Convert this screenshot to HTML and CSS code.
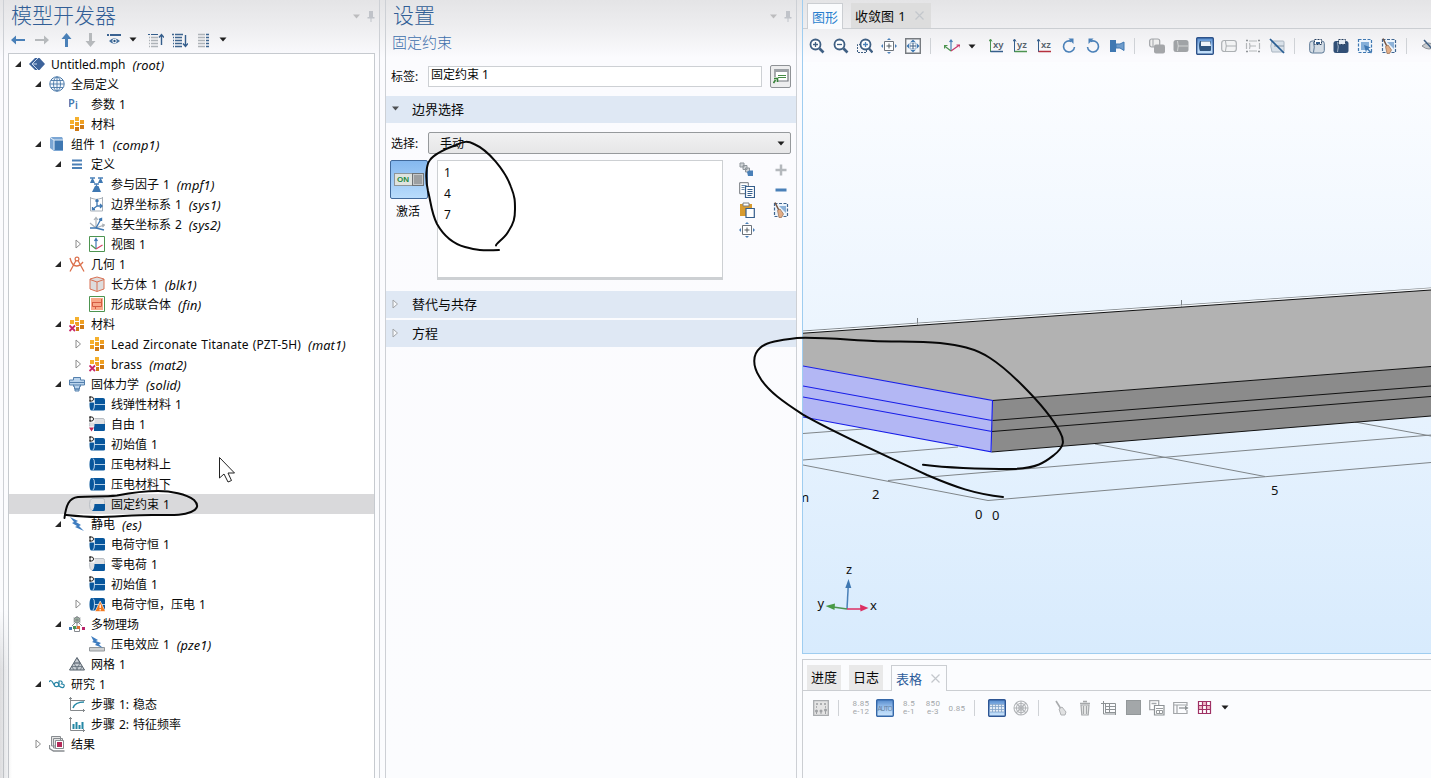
FILE: index.html
```
<!DOCTYPE html>
<html lang="zh-CN">
<head>
<meta charset="utf-8">
<title>Untitled.mph</title>
<link rel="stylesheet" href="styles.css">
</head>
<body>
<svg class="defs" width="0" height="0">
  <defs>
    <linearGradient id="gsel" x1="0" y1="0" x2="0" y2="1"><stop offset="0" stop-color="#5389cc"/><stop offset=".5" stop-color="#a3c9f2"/><stop offset="1" stop-color="#cbe5fc"/></linearGradient>
    <linearGradient id="gsky" x1="0" y1="0" x2="0" y2="1"><stop offset="0" stop-color="#fcfdff"/><stop offset="1" stop-color="#d8ebfd"/></linearGradient>
  </defs>
</svg>
<svg class="sprite" width="0" height="0">
  <symbol id="open" viewBox="0 0 8 8"><path d="M7 1v6H1z" fill="#262626"/></symbol>
  <symbol id="closed" viewBox="0 0 8 10"><path d="M2 1l4.500 4L2 9z" fill="#fff" stroke="#8c8c8c"/></symbol>
  <symbol id="drop" viewBox="0 0 8 5"><path d="M.5.5h7L4 4.500z" fill="#1e1e1e"/></symbol>
  <symbol id="close" viewBox="0 0 9 9"><path d="M.5.5l8 8M8.500.5l-8 8" stroke="#c3c7cc" stroke-width="1.200"/></symbol>
  <symbol id="pin" viewBox="0 0 8 11"><path d="M2 0h4v6h1.500v1.500h-3V11h-1V7.500H.5V6H2z" fill="#c0c3c9"/></symbol>
  <symbol id="left" viewBox="0 0 16 16"><path d="M1 8l5-4.500V7h9v2H6v3.500z" fill="#4a80b8"/></symbol>
  <symbol id="right" viewBox="0 0 16 16"><path d="M15 8l-5-4.500V7H1v2h9v3.500z" fill="#b6b9bc"/></symbol>
  <symbol id="up" viewBox="0 0 16 16"><path d="M8.500 1l5 6H10v8H7V7H3.500z" fill="#4a80b8"/></symbol>
  <symbol id="down" viewBox="0 0 16 16"><path d="M8.500 15l5-6H10V1H7v8H3.500z" fill="#b6b9bc"/></symbol>
  <symbol id="eye" viewBox="0 0 16 16"><path d="M1 3h2M4 3h11" stroke="#3a6291" stroke-width="2"/><path d="M3 9q5-5.500 11 0q-6 5.500-11 0z" fill="#44709e"/><circle cx="8.500" cy="9" r="2.200" fill="#fff"/><circle cx="8.500" cy="9" r="1.200" fill="#27517f"/></symbol>
  <symbol id="collapse" viewBox="0 0 16 16"><path d="M0 2.500h2M3 2.500h7" stroke="#355e8c"/><path d="M1 5.500h1M3 5.500h7M1 8.500h1M3 8.500h7M1 11.500h1M3 11.500h7M1 14.500h1M3 14.500h7" stroke="#aeb3b8" stroke-width="1.600"/><path d="M13.500 13V3M11 5.500L13.500 2.500 16 5.500" fill="none" stroke="#355e8c" stroke-width="1.400"/></symbol>
  <symbol id="expand" viewBox="0 0 16 16"><path d="M0 2.500h2M3 2.500h8M1 5.500h1M3 5.500h7M1 8.500h1M3 8.500h7M1 11.500h1M3 11.500h7M1 14.500h1M3 14.500h7" stroke="#3f668f" stroke-width="1.500"/><path d="M13.500 3v11M11 11.500l2.500 3 2.500-3" fill="none" stroke="#355e8c" stroke-width="1.400"/></symbol>
  <symbol id="cols" viewBox="0 0 16 16"><path d="M2 2.500h7M2 5.500h7M2 8.500h7M2 11.500h7M2 14.500h7" stroke="#aeb3b8" stroke-width="1.600"/><path d="M10 2.500h3M10 5.500h3M10 8.500h3M10 11.500h3M10 14.500h3" stroke="#3f668f" stroke-width="1.600"/></symbol>

  <symbol id="root" viewBox="0 0 16 16"><path d="M0 8l6-6h4.500L16 8l-5.500 6H6z" fill="#3d639b"/><path d="M9 2L3 8l6 6M3 8h5" fill="none" stroke="#c8d8ee"/></symbol>
  <symbol id="globe" viewBox="0 0 16 16"><circle cx="8" cy="8" r="7.200" fill="#f3f8fd" stroke="#4a78a8"/><ellipse cx="8" cy="8" rx="3.500" ry="7" fill="none" stroke="#4a78a8" stroke-width=".9"/><path d="M8 1v14M1 8h14M2 4.500h12M2 11.500h12" stroke="#4a78a8" stroke-width=".9"/></symbol>
  <symbol id="pi" viewBox="0 0 16 16"><text x="-1" y="11" font-family="Noto Sans" font-size="11" font-weight="600" fill="#4376ae">P</text><text x="6" y="13" font-family="Noto Sans" font-size="10" font-weight="600" fill="#4376ae">i</text></symbol>
  <symbol id="mat" viewBox="0 0 16 16"><path d="M6 1h4v4H6zM1 4h4v4H1z" fill="#f5b02e"/><path d="M11 4h4v4h-4zM6 6h4v4H6zM1 9h4v4H1z" fill="#ef9f22"/><path d="M11 9h4v4h-4zM6 11h4v4H6z" fill="#cf7a16"/></symbol>
  <symbol id="matx" viewBox="0 0 16 16"><use href="#mat"/><path d="M0 8.500h7V16H0z" fill="#fff"/><path d="M.5 9.500l5.500 5.500M6 9.500L.5 15" stroke="#c9286a" stroke-width="1.800"/></symbol>
  <symbol id="comp" viewBox="0 0 16 16"><path d="M1 2l2-1h10l1 2v12H5L1 12z" fill="#7ba6d4"/><path d="M5 4h9v10H5z" fill="#3f78b2"/><path d="M1.500 2L5 4v10M5 4h9" fill="none" stroke="#e6f0fa"/></symbol>
  <symbol id="defs" viewBox="0 0 16 16"><path d="M3 4.500h10M3 8.500h10M3 12h10" stroke="#4a7fb5" stroke-width="2"/></symbol>
  <symbol id="mpf" viewBox="0 0 16 16"><path d="M1 2h5M3.500 2v3M9 2h5M11.500 2v3M5 8h5M7.500 8v4" stroke="#4a80b8" stroke-width="1.300"/><path d="M2.500 3.500h2L6 7H1zM10.500 3.500h2L14 7H9zM6 10h3.500l2.500 6H3z" fill="#3f78b2"/></symbol>
  <symbol id="sys1" viewBox="0 0 16 16"><path d="M1.500 1v14h12V1M1.500 2q6 3 12 0" fill="none" stroke="#a9b1b9"/><path d="M8 4v6l-4 3M8 10h5M6.500 5.500L8 3.500l1.500 2M3.500 11v2.500H6M11 8l2 2-2 2" fill="none" stroke="#3f78b2" stroke-width="1.300"/></symbol>
  <symbol id="sys2" viewBox="0 0 16 16"><path d="M7 12V2M7 12l8-3M7 12L1 7M5 4l2-2.500L9 4M13 8l2.500 1-2 2" fill="none" stroke="#aab0b6" stroke-width="1.200"/><path d="M7 12l5-9M7 12H1M7 12l8 2M12.500 5V2.500L10 3.500" fill="none" stroke="#3f78b2" stroke-width="1.400"/></symbol>
  <symbol id="view" viewBox="0 0 16 16"><path d="M.5.5h15v15H.5z" fill="#fff" stroke="#4d9450"/><path d="M7 13V3M5.500 5L7 2.500 8.500 5" fill="none" stroke="#3f78b2" stroke-width="1.200"/><path d="M7 13l6.500-4" stroke="#d84367" stroke-width="1.300"/><path d="M7 13L2 9" stroke="#4d9450" stroke-width="1.300"/></symbol>
  <symbol id="geom" viewBox="0 0 16 16"><circle cx="8" cy="3" r="1.900" fill="none" stroke="#db704c" stroke-width="1.200"/><path d="M7 4.500L1 15.500M9 4.500l6 11M1 2q2 8 6.500 8Q11 10 14 6" fill="none" stroke="#db704c" stroke-width="1.300"/></symbol>
  <symbol id="block" viewBox="0 0 16 16"><path d="M1 3l7-2 7 2v10l-7 2.500L1 13z" fill="#dedcdc" stroke="#d97052"/><path d="M1 3.500L8 6l7-2.500M8 6v9" fill="none" stroke="#d97052"/></symbol>
  <symbol id="union" viewBox="0 0 16 16"><path d="M.5.5h15v15H.5z" fill="#fff" stroke="#4d9450"/><path d="M2 2h12v12H2z" fill="#f8a889"/><path d="M3 6.500h9.500V3M12.500 6v4.500H3.500V6.500M6.500 10.500V13" fill="none" stroke="#d65c43"/></symbol>
  <symbol id="solid" viewBox="0 0 16 16"><path d="M4.500 1.500h7V4h4v5h-4v1.500h-1V13h-5v-2.500h-1V9h-4V4h4zM6 13h4v2H6z" fill="#b9d3ec" stroke="#5480ad"/><path d="M1 6.500h14M4 9h8" stroke="#5480ad"/></symbol>
  <symbol id="dom" viewBox="0 0 16 16"><path d="M2.500 2H14q2 0 2 2v9.500q0 1-1.500 1H2.500Q.5 14.500.5 8.500T2.500 2z" fill="#07569c"/><path d="M4 2.500Q5.500 3 5.500 8T4 14M5.500 8.500H16" fill="none" stroke="#c7dcef" stroke-width=".9"/></symbol>
  <symbol id="bnd" viewBox="0 0 16 16"><path d="M3 2.500H14q1.500 0 1.500 2v9q0 1-1 1H3Q.5 13.500.5 8.500T3 2.500z" fill="#dedfe1" stroke="#b9bec4"/><path d="M5.500 8H16v5.500q0 1.500-1.500 1.500H3Q5.500 13 5.500 8z" fill="#07569c"/></symbol>
  <symbol id="dee" viewBox="0 0 16 16"><path d="M0 0h5.500v6.500H0z" fill="#fff"/><path d="M1 1h2q1.500.3 1.500 2T3 5H1zM0 1h2M0 5h2" fill="none" stroke="#222"/></symbol>
  <symbol id="ddom" viewBox="0 0 16 16"><use href="#dom"/><use href="#dee"/></symbol>
  <symbol id="dbnd" viewBox="0 0 16 16"><use href="#bnd"/><use href="#dee"/></symbol>
  <symbol id="free" viewBox="0 0 16 16"><use href="#dbnd"/><path d="M0 10.500h5V16H0z" fill="#fff"/><path d="M0 11.500h5L2.500 15.500z" fill="#c02858"/></symbol>
  <symbol id="warn" viewBox="0 0 16 16"><use href="#dom"/><path d="M11.200 5l5.300 10.500H6z" fill="#f47a20" stroke="#fff" stroke-width=".6"/><path d="M11.200 8.500v3.500M11.200 13v1.500" stroke="#fff" stroke-width="1.300"/></symbol>
  <symbol id="bolt" viewBox="0 0 16 16"><path d="M1 1l8 4-2 1 5 3-2 1 5 5-9-4 2-1-5-3 2-1z" fill="#3f7dc0"/></symbol>
  <symbol id="multi" viewBox="0 0 16 16"><circle cx="8" cy="4" r="3" fill="#a8cba9" stroke="#878b8f"/><path d="M8 0v8M4.500 2l7 4M11.500 2l-7 4M3 10l3-3M13 10l-3-3M8 8v4M5.500 12.500h5v3h-5z" fill="none" stroke="#85898e"/><path d="M0 11h3v3H0z" fill="#3f78b2"/><path d="M4 10h3v3H4z" fill="#4d9450"/><path d="M8 10h3v3H8z" fill="#df6d34"/><path d="M13 11h3v3h-3z" fill="#b9236a"/></symbol>
  <symbol id="pze" viewBox="0 0 16 16"><path d="M.5 11.500h15v3.500H.5z" fill="#cfd1d2" stroke="#92979b"/><path d="M2 0l7 4-2 1 5 2-2 1.500 4 3.500-8-3 1.500-1.500L3 6l1.500-1z" fill="#3f7dc0"/></symbol>
  <symbol id="mesh" viewBox="0 0 16 16"><path d="M8 1.500L15.500 14H.5z" fill="#c6ccd2" stroke="#535e69"/><path d="M5 7h6M3 10.500h10M5 7l3.500 7M11 7l-3.500 7M3 11l2 3M13 11l-2 3M8 2l3 5-6 0" fill="none" stroke="#626d78" stroke-width=".8"/></symbol>
  <symbol id="study" viewBox="0 0 16 16"><path d="M0 6q2-3 4 1t4 3" fill="none" stroke="#2a86a6" stroke-width="1.200"/><circle cx="7.500" cy="8.500" r="2.200" fill="#fff" stroke="#2a86a6" stroke-width="1.200"/><path d="M10 11V5h2q2 1 .5 3 3.500 0 2.500 2.500T10 10" fill="none" stroke="#2a86a6" stroke-width="1.200"/></symbol>
  <symbol id="step1" viewBox="0 0 16 16"><path d="M1.500 1v13.500H16M0 2.500h3M14.500 13v3M1 4.500h15" fill="none" stroke="#85898c"/><path d="M4 12Q6 6 15 6" fill="none" stroke="#2588a5" stroke-width="1.500"/></symbol>
  <symbol id="step2" viewBox="0 0 16 16"><path d="M1.500 1v13.500H16M0 2.500h3M14.500 13v3" fill="none" stroke="#85898c"/><path d="M4.500 13V8M7.500 13V6M10.500 13V9M13.500 13V6" stroke="#2588a5" stroke-width="2"/></symbol>
  <symbol id="results" viewBox="0 0 16 16"><path d="M2.500 .5h9V10h-9zM4.500 2.500h9V12h-9z" fill="#e5e5e5" stroke="#888c90"/><path d="M6.500 4.500h8v8h-8z" fill="#fff" stroke="#888c90"/><path d="M8 6h5v5H8z" fill="#b42a59"/><path d="M.5 9v3.500l4 2.500h11" fill="none" stroke="#888c90" stroke-width="1.300"/></symbol>

  <symbol id="zin" viewBox="0 0 16 16"><circle cx="6.500" cy="6.500" r="5" fill="#fff" stroke="#3f5f83" stroke-width="1.800"/><path d="M10.500 10.500l4 4" stroke="#3f5f83" stroke-width="2.600"/><path d="M4 6.500h5M6.500 4v5" stroke="#3f5f83" stroke-width="1.300"/></symbol>
  <symbol id="zout" viewBox="0 0 16 16"><circle cx="6.500" cy="6.500" r="5" fill="#fff" stroke="#3f5f83" stroke-width="1.800"/><path d="M10.500 10.500l4 4" stroke="#3f5f83" stroke-width="2.600"/><path d="M4 6.500h5" stroke="#3f5f83" stroke-width="1.300"/></symbol>
  <symbol id="zbox" viewBox="0 0 16 16"><path d="M4 6.500H.5v8h9V12" fill="none" stroke="#3f5f83" stroke-dasharray="2 1"/><circle cx="8.500" cy="6.500" r="5" fill="#fff" stroke="#3f5f83" stroke-width="1.800"/><path d="M12 10.500l3.500 4" stroke="#3f5f83" stroke-width="2.400"/><path d="M6 6.500h5M8.500 4v5" stroke="#4a80b8" stroke-width="1.300"/></symbol>
  <symbol id="zsel" viewBox="0 0 16 16"><path d="M3.500 3.500h9v9h-9z" fill="#fff" stroke="#6c737b"/><path d="M5.500 8h5M8 5.500v5" stroke="#555c63"/><path d="M8 0l2 2H6zM8 16l2-2H6zM0 8l2-2v4zM16 8l-2-2v4z" fill="#4a80b8"/></symbol>
  <symbol id="zext" viewBox="0 0 16 16"><path d="M.7.7h14.600v14.600H.7z" fill="#f5f7fa" stroke="#777b80" stroke-width="1.400"/><path d="M8 1.500L10.500 4h-5zM8 14.500l2.500-2.500h-5zM1.500 8L4 5.500v5zM14.500 8L12 5.500v5z" fill="#3f78b2"/><path d="M5 5h6v6H5z" fill="#fff" stroke="#8ba9c9"/><path d="M5 8h6M8 5v6" stroke="#3f5f83"/></symbol>
  <symbol id="axes" viewBox="0 0 16 16"><path d="M7 13V2M5.500 4L7 2l1.500 2" fill="none" stroke="#4a80b8" stroke-width="1.200"/><path d="M7 13l8.500-6M12.500 7H16v2.500" fill="none" stroke="#ca376b" stroke-width="1.200"/><path d="M7 13L.5 8M.5 10.500V7.500h3" fill="none" stroke="#4d9450" stroke-width="1.200"/></symbol>
  <symbol id="xy" viewBox="0 0 16 16"><path d="M1.500 14V2M0 3.500L1.500 1 3 3.500" fill="none" stroke="#4d9450"/><path d="M1.500 13.500H14" stroke="#355e8c" stroke-width="1.500"/><text x="4" y="10" class="axt">xy</text></symbol>
  <symbol id="yz" viewBox="0 0 16 16"><path d="M1.500 14V2M0 3.500L1.500 1 3 3.500" fill="none" stroke="#355e8c"/><path d="M1.500 13.500H14" stroke="#4d9450" stroke-width="1.500"/><text x="4" y="10" class="axt">yz</text></symbol>
  <symbol id="xz" viewBox="0 0 16 16"><path d="M1.500 14V2M0 3.500L1.500 1 3 3.500" fill="none" stroke="#355e8c"/><path d="M1.500 13.500H14" stroke="#b6313e" stroke-width="1.500"/><text x="4" y="10" class="axt">xz</text></symbol>
  <symbol id="cw" viewBox="0 0 16 16"><path d="M10.500 3.500A5.500 5.500 0 1 0 13.500 9" fill="none" stroke="#4a80b8" stroke-width="1.600"/><path d="M7.500 .5h5V6z" fill="#4a80b8"/></symbol>
  <symbol id="ccw" viewBox="0 0 16 16"><path d="M5.500 3.500A5.500 5.500 0 1 1 2.500 9" fill="none" stroke="#4a80b8" stroke-width="1.600"/><path d="M8.500 .5h-5V6z" fill="#4a80b8"/></symbol>
  <symbol id="cam" viewBox="0 0 16 16"><path d="M1 2h6v12H1z" fill="#3f78b2"/><path d="M7 6h4L15 4v8.500L11 10H7z" fill="#6f9ccb" stroke="#3f78b2"/></symbol>
  <symbol id="transp" viewBox="0 0 16 16"><rect x=".7" y="1" width="10" height="8" rx="2" fill="#eee" stroke="#a0a3a7" stroke-width="1.200"/><path d="M4 1v8" stroke="#a0a3a7"/><rect x="5" y="6.500" width="11" height="9" rx="2" fill="#a4a6a9"/></symbol>
  <symbol id="cyl" viewBox="0 0 16 16"><rect x=".5" y="2" width="15" height="12" rx="2.500" fill="#a0a3a6"/><path d="M4.500 3q1.500 5 0 10M5 8h10" fill="none" stroke="#dedfe0" stroke-width=".8"/></symbol>
  <symbol id="cylsel" viewBox="0 0 18 18"><rect x=".7" y=".7" width="16.600" height="16.600" rx="1" fill="url(#gsel)" stroke="#2d528a" stroke-width="1.400"/><path d="M4 4h10q1 0 1 1.500V13q0 1-1 1H4q-2-5 0-10z" fill="#2f547e"/><path d="M5 4.500h9L15 9H5z" fill="#eef3f8"/></symbol>
  <symbol id="cylo" viewBox="0 0 16 16"><rect x=".7" y="2.500" width="14.600" height="11" rx="2.500" fill="#f2f3f4" stroke="#acb0b3" stroke-width="1.200"/><path d="M4.500 3q1.500 5 0 10M5 8h10" fill="none" stroke="#acb0b3"/></symbol>
  <symbol id="cylp" viewBox="0 0 16 16"><path d="M4 3h8M4 13h8M5 8h6M1.500 5v6M14.500 5v6M4.500 5q1 3 0 6" fill="none" stroke="#b4b7ba" stroke-width="1.200"/><path d="M1 2.500h2M13 2.500h2M1 13.500h2M13 13.500h2" stroke="#909498" stroke-width="1.500"/></symbol>
  <symbol id="cyls" viewBox="0 0 16 16"><path d="M3 3h11q1 0 1 1v9q0 1-1 1H3Q.5 8 3 3z" fill="#d9e1e9" stroke="#aab6c2"/><path d="M5 8h10" stroke="#8c9aa8"/><path d="M1 1l14 14" stroke="#275d93" stroke-width="1.700"/></symbol>
  <symbol id="selb" viewBox="0 0 16 16"><rect x=".7" y="3" width="14.600" height="12" rx="2.500" fill="#d5dde5" stroke="#5c7895"/><path d="M4.500 4q1.500 5 0 10.500" fill="none" stroke="#5c7895"/><path d="M5.500 1.500h7v5h-7z" fill="#fff" stroke="#263f5e" stroke-dasharray="2 1"/><path d="M7 4h4v2H7z" fill="#355e8c"/></symbol>
  <symbol id="seld" viewBox="0 0 16 16"><rect x=".5" y="3" width="15" height="12" rx="2.500" fill="#314f76"/><path d="M4.500 4q1.500 5 0 10" fill="none" stroke="#a0b1c4"/><path d="M5.500 1.500h7v5h-7z" fill="#e4ebf2" stroke="#263f5e" stroke-dasharray="2 1"/></symbol>
  <symbol id="selc" viewBox="0 0 16 16"><path d="M1.500 1.500h13v13h-13z" fill="#edf5fd" stroke="#3f78b2" stroke-width="1.200" stroke-dasharray="3 1.500"/><path d="M4 4h8v8H4z" fill="#84afd9"/><path d="M7 7l7 2.500-3 1 4 4-1 1-4-4-1 3z" fill="#3f78b2"/></symbol>
  <symbol id="clear" viewBox="0 0 16 16"><path d="M1.500 1.500h13v13h-13z" fill="#edf5fd" stroke="#3f6590" stroke-width="1.200" stroke-dasharray="3 1.500"/><path d="M6 4h7v7z" fill="#8db2d8"/><path d="M2 .5l4 8" stroke="#765440" stroke-width="1.500"/><path d="M4.500 8.500L7 7l3.500 5-2 3.500H6z" fill="#e2ad86" stroke="#936c50" stroke-width=".7"/></symbol>
  <symbol id="hide" viewBox="0 0 16 16"><path d="M1 8q6-6 14 0-7 6-14 0z" fill="#c9cbce" stroke="#8e9298"/><path d="M3 2l11 12" stroke="#3f5f83" stroke-width="1.500"/></symbol>

  <symbol id="eval" viewBox="0 0 16 16"><path d="M.7.7h14.600v14.600H.7z" fill="#e4e4e4" stroke="#a9acaf" stroke-width="1.300"/><path d="M3 4h2M7 4h2M11 4h2M3 7h1M12 7h1" stroke="#9a9da0" stroke-width="1.500"/><circle cx="3.500" cy="11" r="1.500" fill="#9fa1a4"/><circle cx="8" cy="11" r="1.500" fill="#9fa1a4"/><circle cx="12.500" cy="10" r="1.500" fill="#9fa1a4"/><path d="M3.500 11v3M8 11v3M12.500 10v4" stroke="#9fa1a4"/></symbol>
  <symbol id="auto" viewBox="0 0 18 18"><rect x=".7" y=".7" width="16.600" height="16.600" rx="1" fill="url(#gsel)" stroke="#3467a8" stroke-width="1.400"/><text x="1.500" y="12" font-family="Liberation Sans" font-size="6.500" textLength="15" fill="#66819f">AUTO</text></symbol>
  <symbol id="grid" viewBox="0 0 18 18"><rect x=".7" y=".7" width="16.600" height="16.600" rx="1" fill="url(#gsel)" stroke="#2d5593" stroke-width="1.400"/><path d="M2 5h14v8H2z" fill="#e5edf6"/><path d="M2 5.500h14M2 7.500h14M2 10.500h14M2 13h14M4.500 5v8M7.500 5v8M10.500 5v8M13.500 5v8" stroke="#81a2c8" stroke-width=".8"/></symbol>
  <symbol id="polar" viewBox="0 0 16 16"><g fill="none" stroke="#b2b5b8" stroke-width="1.100"><circle cx="8" cy="8" r="7"/><circle cx="8" cy="8" r="4.600"/><circle cx="8" cy="8" r="2.200"/><path d="M8 1v14M1 8h14M3 3l10 10M13 3L3 13"/></g></symbol>
  <symbol id="broom" viewBox="0 0 16 16"><path d="M3 1l5 8" stroke="#a8abad" stroke-width="1.600"/><path d="M6 9l3-2 4 5-1 3H8z" fill="#e0e1e2" stroke="#b0b2b5"/></symbol>
  <symbol id="trash" viewBox="0 0 16 16"><path d="M3 3.500h10M6 1.500h4" stroke="#a5a8aa" stroke-width="1.300"/><path d="M4 5h8l-.8 10H4.800zM6.500 6v8M9.500 6v8" fill="#e9eaea" stroke="#a5a8aa" stroke-width="1.200"/></symbol>
  <symbol id="tab1" viewBox="0 0 16 16"><path d="M2.500 1v13H15M0 3.500h14.500V15M4 3.500h10M4 6.500h10M4 9.500h10M4 12.500h10M8.500 3v10M4.500 3v10" fill="none" stroke="#8d9295"/></symbol>
  <symbol id="copy2" viewBox="0 0 16 16"><path d="M.7.7h9v9h-9z" fill="#fff" stroke="#a6a9ac" stroke-width="1.300"/><path d="M2.500 3.500h5" stroke="#a6a9ac" stroke-width="1.500"/><path d="M5.500 5.500h9.500v9.500H5.500z" fill="#fff" stroke="#8e9396" stroke-width="1.200"/><path d="M7 8.500h7M7.500 10.500h6v3h-6zM10.500 10v4" fill="none" stroke="#969a9d"/></symbol>
  <symbol id="export" viewBox="0 0 16 16"><path d="M14 6V2.500H.7v11H14V10M1 5h13M4 5v8" fill="none" stroke="#a2a5a8" stroke-width="1.200"/><path d="M6 8h7" stroke="#8f9496" stroke-width="1.300"/><path d="M12 5.500L15.500 8 12 10.500z" fill="#8f9496"/></symbol>
  <symbol id="table" viewBox="0 0 16 16"><path d="M1.500 1.500h12v12h-12z" fill="#fff"/><path d="M5.500 1.500h4v4h-4zM1.500 5.500h4v4h-4zM9.500 5.500h4v4h-4z" fill="#f4b9c7"/><path d="M1.500 1.500h12v12h-12zM1.500 5.500h12M1.500 9.500h12M5.500 1.500v12M9.500 1.500v12" fill="none" stroke="#9f3164" stroke-width="1.200"/></symbol>

  <symbol id="goto" viewBox="0 0 16 16"><path d="M2 1.500h13v11.500H2z" fill="#fff" stroke="#74787e" stroke-width="1.200"/><path d="M2 2.500h13" stroke="#9da1a6" stroke-width="3"/><path d="M5 7.500h8M5 9.500h8" stroke="#458c45" stroke-width="1.200"/><path d="M0 9h5v6H0z" fill="#efefef"/><path d="M.5 15l2-3M1 10.500h3.500V14" fill="none" stroke="#388239" stroke-width="1.600"/></symbol>
  <symbol id="bulk" viewBox="0 0 16 16"><g stroke="#8e959b" fill="#cfd3d6"><path d="M1 1h4v4H1zM4 3.500h4v4H4zM6.500 6h4v4h-4z"/></g><path d="M8 10l2-1.500h4V14H9z" fill="#4a80b8"/></symbol>
  <symbol id="copy" viewBox="0 0 16 16"><path d="M.7.7h8.600v11H.7z" fill="#fff" stroke="#70767c"/><path d="M2.500 3.500h5M2.500 5.500h3M2.500 7.500h3" stroke="#6988a8"/><path d="M6.500 4.500h9v11h-9z" fill="#fff" stroke="#355e8c" stroke-width="1.200"/><path d="M8.500 7.500h5M8.500 9.500h5M8.500 11.500h5M8.500 13.500h4" stroke="#355e8c"/></symbol>
  <symbol id="paste" viewBox="0 0 16 16"><path d="M1 2h12v12H1z" fill="#d89b30"/><path d="M4 1h6v3H4z" fill="#fff" stroke="#7d7e80"/><path d="M7 6.500h8.300v9H7z" fill="#fff" stroke="#355e8c" stroke-width="1.200"/></symbol>
  <symbol id="plus" viewBox="0 0 16 16"><path d="M8 2.500v11M2.500 8h11" stroke="#b4b8bc" stroke-width="2.500"/></symbol>
  <symbol id="minus" viewBox="0 0 16 16"><path d="M2.500 8h11" stroke="#4a80b8" stroke-width="3"/></symbol>
</svg>

<main class="app">
  <section class="panel builder">
    <header class="head"><h1>模型开发器</h1><span class="ctl"><svg class="d"><use href="#drop"/></svg><svg class="pin"><use href="#pin"/></svg></span></header>
    <div class="bar tree-bar">
      <i><svg><use href="#left"/></svg></i><i><svg><use href="#right"/></svg></i><i><svg><use href="#up"/></svg></i><i><svg><use href="#down"/></svg></i><i><svg><use href="#eye"/></svg></i><b><svg><use href="#drop"/></svg></b>
      <i><svg><use href="#collapse"/></svg></i><i><svg><use href="#expand"/></svg></i><i><svg><use href="#cols"/></svg></i><b><svg><use href="#drop"/></svg></b>
    </div>
    <div class="tree">
      <div class="row l0"><svg class="tw"><use href="#open"/></svg><svg class="ic"><use href="#root"/></svg><span>Untitled.mph</span><em>(root)</em></div>
      <div class="row l1"><svg class="tw"><use href="#open"/></svg><svg class="ic"><use href="#globe"/></svg><span>全局定义</span></div>
      <div class="row l2"><svg class="tw"></svg><svg class="ic"><use href="#pi"/></svg><span>参数 1</span></div>
      <div class="row l2"><svg class="tw"></svg><svg class="ic"><use href="#mat"/></svg><span>材料</span></div>
      <div class="row l1"><svg class="tw"><use href="#open"/></svg><svg class="ic"><use href="#comp"/></svg><span>组件 1</span><em>(comp1)</em></div>
      <div class="row l2"><svg class="tw"><use href="#open"/></svg><svg class="ic"><use href="#defs"/></svg><span>定义</span></div>
      <div class="row l3"><svg class="tw"></svg><svg class="ic"><use href="#mpf"/></svg><span>参与因子 1</span><em>(mpf1)</em></div>
      <div class="row l3"><svg class="tw"></svg><svg class="ic"><use href="#sys1"/></svg><span>边界坐标系 1</span><em>(sys1)</em></div>
      <div class="row l3"><svg class="tw"></svg><svg class="ic"><use href="#sys2"/></svg><span>基矢坐标系 2</span><em>(sys2)</em></div>
      <div class="row l3"><svg class="tw sh"><use href="#closed"/></svg><svg class="ic"><use href="#view"/></svg><span>视图 1</span></div>
      <div class="row l2"><svg class="tw"><use href="#open"/></svg><svg class="ic"><use href="#geom"/></svg><span>几何 1</span></div>
      <div class="row l3"><svg class="tw"></svg><svg class="ic"><use href="#block"/></svg><span>长方体 1</span><em>(blk1)</em></div>
      <div class="row l3"><svg class="tw"></svg><svg class="ic"><use href="#union"/></svg><span>形成联合体</span><em>(fin)</em></div>
      <div class="row l2"><svg class="tw"><use href="#open"/></svg><svg class="ic"><use href="#matx"/></svg><span>材料</span></div>
      <div class="row l3"><svg class="tw sh"><use href="#closed"/></svg><svg class="ic"><use href="#mat"/></svg><span class="latin">Lead Zirconate Titanate (PZT-5H)</span><em>(mat1)</em></div>
      <div class="row l3"><svg class="tw sh"><use href="#closed"/></svg><svg class="ic"><use href="#matx"/></svg><span class="latin">brass</span><em>(mat2)</em></div>
      <div class="row l2"><svg class="tw"><use href="#open"/></svg><svg class="ic"><use href="#solid"/></svg><span>固体力学</span><em>(solid)</em></div>
      <div class="row l3"><svg class="tw"></svg><svg class="ic"><use href="#ddom"/></svg><span>线弹性材料 1</span></div>
      <div class="row l3"><svg class="tw"></svg><svg class="ic"><use href="#free"/></svg><span>自由 1</span></div>
      <div class="row l3"><svg class="tw"></svg><svg class="ic"><use href="#ddom"/></svg><span>初始值 1</span></div>
      <div class="row l3"><svg class="tw"></svg><svg class="ic"><use href="#dom"/></svg><span>压电材料上</span></div>
      <div class="row l3"><svg class="tw"></svg><svg class="ic"><use href="#dom"/></svg><span>压电材料下</span></div>
      <div class="row l3 selected"><svg class="tw"></svg><svg class="ic"><use href="#bnd"/></svg><span>固定约束 1</span></div>
      <div class="row l2"><svg class="tw"><use href="#open"/></svg><svg class="ic"><use href="#bolt"/></svg><span>静电</span><em>(es)</em></div>
      <div class="row l3"><svg class="tw"></svg><svg class="ic"><use href="#ddom"/></svg><span>电荷守恒 1</span></div>
      <div class="row l3"><svg class="tw"></svg><svg class="ic"><use href="#dbnd"/></svg><span>零电荷 1</span></div>
      <div class="row l3"><svg class="tw"></svg><svg class="ic"><use href="#ddom"/></svg><span>初始值 1</span></div>
      <div class="row l3"><svg class="tw sh"><use href="#closed"/></svg><svg class="ic"><use href="#warn"/></svg><span>电荷守恒，压电 1</span></div>
      <div class="row l2"><svg class="tw"><use href="#open"/></svg><svg class="ic"><use href="#multi"/></svg><span>多物理场</span></div>
      <div class="row l3"><svg class="tw"></svg><svg class="ic"><use href="#pze"/></svg><span>压电效应 1</span><em>(pze1)</em></div>
      <div class="row l2"><svg class="tw"></svg><svg class="ic"><use href="#mesh"/></svg><span>网格 1</span></div>
      <div class="row l1"><svg class="tw"><use href="#open"/></svg><svg class="ic"><use href="#study"/></svg><span>研究 1</span></div>
      <div class="row l2"><svg class="tw"></svg><svg class="ic"><use href="#step1"/></svg><span>步骤 1: 稳态</span></div>
      <div class="row l2"><svg class="tw"></svg><svg class="ic"><use href="#step2"/></svg><span>步骤 2: 特征频率</span></div>
      <div class="row l1"><svg class="tw sh"><use href="#closed"/></svg><svg class="ic"><use href="#results"/></svg><span>结果</span></div>
    </div>
  </section>

  <section class="panel settings">
    <header class="head"><h1>设置</h1><span class="ctl"><svg class="d"><use href="#drop"/></svg><svg class="pin"><use href="#pin"/></svg></span></header>
    <h2>固定约束</h2>
    <div class="field name"><label>标签:</label><div class="input">固定约束 1</div><div class="btn"><svg><use href="#goto"/></svg></div></div>
    <div class="sec first"><svg class="sd"><use href="#drop"/></svg>边界选择</div>
    <div class="field pick"><label>选择:</label><div class="select"><span>手动</span><svg><use href="#drop"/></svg></div></div>
    <div class="sel">
      <div class="act"><div class="toggle"><span>ON</span><s></s></div><p>激活</p></div>
      <div class="list"><div>1</div><div>4</div><div>7</div></div>
      <div class="tools"><svg><use href="#bulk"/></svg><svg><use href="#plus"/></svg><svg><use href="#copy"/></svg><svg><use href="#minus"/></svg><svg><use href="#paste"/></svg><svg><use href="#clear"/></svg><svg><use href="#zsel"/></svg></div>
    </div>
    <div class="sec"><svg class="sc"><use href="#closed"/></svg>替代与共存</div>
    <div class="sec"><svg class="sc"><use href="#closed"/></svg>方程</div>
  </section>

  <div class="right">
    <section class="graphics">
      <div class="tabs"><div class="tab on blue">图形</div><div class="tab conv">收敛图 1<svg><use href="#close"/></svg></div></div>
      <div class="bar gbar">
        <i><svg><use href="#zin"/></svg></i><i><svg><use href="#zout"/></svg></i><i><svg><use href="#zbox"/></svg></i><i><svg><use href="#zsel"/></svg></i><i><svg><use href="#zext"/></svg></i><u class="short"></u>
        <i><svg><use href="#axes"/></svg></i><b class="gdrop"><svg><use href="#drop"/></svg></b>
        <i><svg><use href="#xy"/></svg></i><i><svg><use href="#yz"/></svg></i><i><svg><use href="#xz"/></svg></i><i><svg><use href="#cw"/></svg></i><i><svg><use href="#ccw"/></svg></i><i><svg><use href="#cam"/></svg></i><u></u>
        <i><svg><use href="#transp"/></svg></i><i><svg><use href="#cyl"/></svg></i><i><svg class="big"><use href="#cylsel"/></svg></i><i><svg><use href="#cylo"/></svg></i><i><svg><use href="#cylp"/></svg></i><i><svg><use href="#cyls"/></svg></i><u></u>
        <i><svg><use href="#selb"/></svg></i><i><svg><use href="#seld"/></svg></i><i><svg><use href="#selc"/></svg></i><i><svg><use href="#clear"/></svg></i><u></u><i><svg><use href="#hide"/></svg></i>
      </div>
      <svg class="scene" viewBox="803 62 628 591" width="628" height="591">
        <rect x="803" y="62" width="628" height="591" fill="url(#gsky)"/>
        <g fill="none" stroke="#7f8589">
          <path d="M803 433.500l67-5M803 460l155-13M803 465l185 35.500 443-38M888 480.500l202-17 341-28.500M1095 444l170 32.500M1355 422l76 14"/>
          <path d="M803 331l628-43M917.500 318v7M1181.500 300v7"/>
        </g>
        <path d="M803 332.500l628-43V288L803 331.500z" fill="#fff" opacity=".7"/>
        <path d="M803 333.200l628-43.200v76.500L992.500 400.500 803 366z" fill="#b2b2b2"/>
        <path d="M992.500 400.500l438.500-34v49.500l-439.500 36z" fill="#8b8b8b"/>
        <path d="M803 333.200l628-43.200M992.500 400.500l438.500-34M992.500 420.500l438.500-34.500M992 431.500l439-35M991.500 452l439.500-36" fill="none" stroke="#111"/>
        <path d="M803 366l189.500 34.500-1.500 51.200L803 417z" fill="#b3b7f4"/>
        <path d="M803 366l189.500 34.500-1.500 51.200L803 417M803 386l189 34.500M803 397l189 34.500" fill="none" stroke="#171de8" stroke-width="1.150"/>
        <g class="lbl"><text x="797" y="502">m</text><text x="872" y="499">2</text><text x="975" y="519">0</text><text x="992" y="520">0</text><text x="1271" y="495">5</text><text x="846" y="574">z</text><text x="817.500" y="608">y</text><text x="870" y="610">x</text></g>
        <path d="M847 609l1.300-24" stroke="#4a80b8" stroke-width="1.500"/><path d="M845.300 588l3.200-9 2.800 9z" fill="#3f78b2"/>
        <path d="M847 609l-14-2" stroke="#4d9450" stroke-width="1.500"/><path d="M835 603.500l-9.500 2.500 9 4z" fill="#489a46"/>
        <path d="M847 609h14" stroke="#dc2f62" stroke-width="1.500"/><path d="M860 604.500l8.500 3.500-8 3.500z" fill="#dc2f62"/>
      </svg>
    </section>
    <section class="output">
      <div class="tabs otabs"><div class="tab">进度</div><div class="tab">日志</div><div class="tab on navy">表格<svg><use href="#close"/></svg></div></div>
      <div class="bar obar">
        <i><svg><use href="#eval"/></svg></i><u></u>
        <i class="num">8.85<br>e-12</i><i><svg class="big"><use href="#auto"/></svg></i><i class="num">8.5<br>e-1</i><i class="num">850<br>e-3</i><i class="num one">0.85</i><u></u>
        <i><svg class="big"><use href="#grid"/></svg></i><i><svg><use href="#polar"/></svg></i><u></u>
        <i><svg><use href="#broom"/></svg></i><i><svg><use href="#trash"/></svg></i><i><svg><use href="#tab1"/></svg></i><i><span class="block"></span></i><i><svg><use href="#copy2"/></svg></i><i><svg><use href="#export"/></svg></i><i><svg><use href="#table"/></svg></i><b><svg><use href="#drop"/></svg></b>
      </div>
    </section>
  </div>
</main>

<div class="edge-shade"></div>
<svg class="ink" viewBox="0 0 1431 778" width="1431" height="778">
  <g fill="none" stroke="#080808" stroke-width="2" stroke-linecap="round" stroke-linejoin="round">
    <path d="M496 245.500C496 243 504 239 508 232C514 223 515 218 515 209C515 201 515 197 511 187C505 170 488 150 474 144C468 141 464 141 456 145C448 148 434 154 430 160C426 165 425 178 428 191C431 202 431 212 437 224C445 238 454 244 465 247C476 250 482 251 499 250"/>
    <path d="M64.500 518C66 505 69 498 78 497C91 496 104 497 117 495.500C130 493 142 491 158 491C171 491 186 494 194 500C199 505 198 509 191 512C182 516 172 515 152 515C132 515 115 517 97 517C86 517 76 516 66.500 515"/>
    <path d="M923 464.700C950 468 990 469 1013 469C1038 468 1045 462 1054 455C1064 447 1065 441 1060 432C1052 417 1038 401 1023 386C1012 375 1001 365 990 358C975 348 958 345 940 343C918 341 895 342 873 341C850 340 820 337 797 338C780 340 766 342 760 348C752 355 753 366 759 376C767 391 785 403 803 414.700C840 436 885 455 927 475C955 487 975 494 1003 497"/>
  </g>
  <path d="M219.500 457.500v20.500l4.500-4 4 8 3.500-1.500-3.500-7.500h6.500z" fill="#fff" stroke="#222"/>
</svg>
</body>
</html>
```
FILE: styles.css
```
* { box-sizing: border-box; }
html, body { margin: 0; height: 778px; overflow: hidden; }
body {
  font-family: "Noto Sans", "Noto Sans CJK SC", sans-serif;
  font-size: 12px;
  color: #0a0a0a;
  background: linear-gradient(#e4e4e6 0, #eeeef0 28px, #fbfbfe 58px, #fbfcfe 100%);
}
svg { display: block; flex: none; overflow: visible; }
.defs { position: absolute; }
.sprite { display: none; }
h1, h2, p { margin: 0; font-weight: 300; }
.app { display: flex; gap: 5px; height: 778px; padding-left: 3px; overflow: hidden; }
.panel { border: solid #cdd0d5; border-width: 0 1px; flex: none; display: flex; flex-direction: column; }
.builder { width: 377px; padding: 0 4px; }
.settings { width: 412px; }

.head { display: flex; justify-content: space-between; align-items: center; height: 32px; padding: 0 0 0 3px; }
.head h1 { font-size: 21px; line-height: 30px; height: 32px; color: #315e96; }
.settings .head { padding: 0 4px 0 7px; }
.ctl { display: flex; align-items: center; gap: 6px; }
.ctl .d { width: 9px; height: 5px; opacity: .22; }
.ctl .pin { width: 8px; height: 11px; }

.bar { display: flex; align-items: center; flex: none; }
.bar i { width: 24px; height: 24px; flex: none; display: flex; align-items: center; justify-content: center; font-style: normal; }
.bar i svg { width: 16px; height: 16px; }
.bar i svg.big { width: 18px; height: 18px; }
.bar b { width: 14px; display: flex; justify-content: center; flex: none; }
.bar b svg { width: 8px; height: 5px; }
.bar u { width: 16px; height: 16px; flex: none; padding-left: 5px; text-decoration: none; }
.bar u::before { content: ""; display: block; width: 1px; height: 16px; background: #cfd2d6; }
.bar u.short { width: 15px; }
.tree-bar { height: 21px; margin-left: -2px; padding-bottom: 6px; }
.tree-bar b + i { margin-left: 4px; }

.tree { flex: 1; width: 367px; border: 1px solid #c6cacf; border-bottom: 0; background: #fff; min-height: 0; }
.row { display: flex; align-items: center; height: 20px; white-space: pre; word-spacing: .8px; }
.row span, .row em { height: 20px; line-height: 18px; padding-top: 2px; }
.l0 { padding-left: 5px; } .l1 { padding-left: 25px; } .l2 { padding-left: 45px; } .l3 { padding-left: 65px; }
.row .tw { width: 8px; height: 8px; margin-right: 7px; }
.row .tw.sh { height: 10px; }
.row .ic { width: 16px; height: 16px; margin-right: 6px; }
.row em { margin-left: 7px; font-size: 12.8px; letter-spacing: .1px; }
.row .latin { letter-spacing: .16px; }
.row.selected { background: #d9d9db; }

.settings h2 { font-size: 15px; line-height: 20px; padding-left: 6px; color: #3d6fac; height: 33px; }
.field { display: flex; align-items: center; padding-left: 5px; }
.field label { width: 37px; }
.name { height: 22px; margin-bottom: 9px; }
.input { width: 334px; height: 21px; line-height: 16px; border: 1px solid #cdd0d4; background: #fff; padding-left: 2px; margin-right: 8px; }
.btn { width: 21px; height: 23px; border: 1px solid #8f9296; border-radius: 2px; background: #ededee; padding: 2px; }
.btn svg { width: 16px; height: 16px; }
.sec { height: 27px; background: #dfe8f4; font-size: 13px; display: flex; align-items: center; padding: 0 0 2px 5px; margin-bottom: 2px; flex: none; }
.sec svg { width: 9px; height: 5px; margin-right: 12px; opacity: .75; }
.sec svg.sc { width: 8px; height: 10px; margin-right: 13px; }
.sec.first { margin-bottom: 9px; }
.select { width: 363px; height: 22px; border: 1px solid #96999c; border-radius: 2px; background: linear-gradient(#f1f1f2, #e6e6e7); display: flex; align-items: center; justify-content: space-between; padding: 0 5px 0 11px; }
.select svg { width: 8px; height: 5px; }
.sel { display: flex; height: 131px; margin-top: 6px; padding-left: 4px; }
.act { width: 47px; }
.toggle { width: 38px; height: 39px; border: 1px solid #41699b; border-radius: 2px; background: linear-gradient(#85b8ef, #b9dcfc); display: flex; align-items: center; padding-left: 3px; }
.toggle span { width: 18px; height: 13px; border: 1px solid #8f9598; border-right: 0; background: #dfe3df; font: bold 8px/11px "Liberation Sans", sans-serif; color: #258a43; padding-left: 2px; }
.toggle s { width: 12px; height: 13px; background: #9c9fa1; border: 1px solid #6f7477; box-shadow: inset 0 0 0 1px #c6c8c9; }
.act p { font-weight: 400; padding-left: 6px; line-height: 26px; }
.list { width: 286px; height: 120px; background: #fff; border: 1px solid #cdd0d3; border-bottom-width: 3px; padding: 1px 6px; line-height: 21px; }
.tools { display: grid; grid-template-columns: 16px 16px; column-gap: 18px; grid-auto-rows: 20px; margin-left: 16px; align-content: start; justify-items: center; }
.tools svg { width: 16px; height: 16px; margin-top: 2px; }

.right { flex: 1; min-width: 0; display: flex; flex-direction: column; gap: 5px; }
.graphics { height: 654px; border: solid #9fcdf0; border-width: 0 0 1px 1px; overflow: hidden; flex: none; }
.tabs { display: flex; height: 29px; padding: 3px 0 0 4px; gap: 8px; border-bottom: 1px solid #cbced2; }
.tab { font-size: 13px; line-height: 24px; height: 25px; background: #dddddd; padding: 0 4px; display: flex; align-items: center; }
.tab svg { width: 9px; height: 9px; margin-left: 9px; }
.tab.on { background: #fafbfd; border: 1px solid #cbced2; border-bottom: 0; height: 26px; }
.blue { color: #2a7fce; }
.navy { color: #2c5b9a; }
.conv { padding-right: 7px; word-spacing: .8px; }
.gbar { height: 33px; padding: 1px 0 0 2px; width: 700px; }
.gbar .gdrop { width: 16px; margin-right: 5px; }
.scene { width: 628px; height: 591px; overflow: hidden; }
.lbl { font: 13px "Noto Sans", sans-serif; fill: #111; }
.axt { font: 600 9.5px "Noto Sans", sans-serif; fill: #56616c; }
.output { flex: 1; border: solid #cbced2; border-width: 1px 0 0 1px; background: #fbfcfe; overflow: hidden; }
.otabs { height: 31px; padding-top: 5px; }
.otabs .tab { background: #e9e9e9; padding-bottom: 1px; }
.otabs .tab.on { background: #fbfcfe; height: 26px; padding: 0 6px 0 4px; }
.obar { padding: 0 0 2px 6px; height: 35px; }
.bar i.num { display: block; font: 8px/8px Roboto, sans-serif; color: #a3a7aa; text-align: center; padding-top: 4px; letter-spacing: .3px; }
.bar i.num.one { line-height: 17px; }
.obar b { width: 16px; }
.block { width: 15px; height: 15px; background: #a3a7a9; border: 1px solid #93989a; }

.edge-shade { position: absolute; left: 0; top: 610px; width: 12px; height: 168px; background: linear-gradient(90deg, rgba(120,120,120,.24), rgba(160,160,160,0)); -webkit-mask-image: linear-gradient(transparent, #000 60px); mask-image: linear-gradient(transparent, #000 60px); pointer-events: none; }
.ink { position: absolute; left: 0; top: 0; pointer-events: none; }
```
